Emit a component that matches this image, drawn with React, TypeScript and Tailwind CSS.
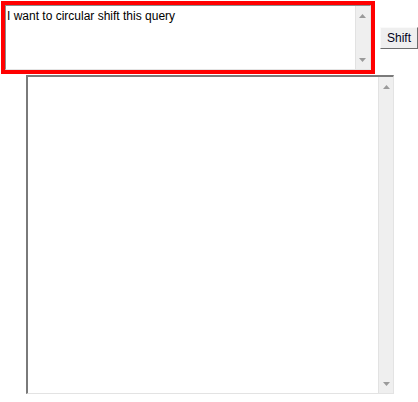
import { useState } from 'react'

const ArrowUp = () => (
  <svg width="7" height="4" viewBox="0 0 7 4">
    <polygon points="3.5,0 7,4 0,4" fill="#9a9a9a" />
  </svg>
)

const ArrowDown = () => (
  <svg width="7" height="4" viewBox="0 0 7 4">
    <polygon points="0,0 7,0 3.5,4" fill="#9a9a9a" />
  </svg>
)

const ScrollTrack = () => (
  <div className="w-[15px] shrink-0 bg-[#efefef] border-l border-[#e2e2e2] flex flex-col items-center justify-between pt-[8px] pb-[7px]">
    <ArrowUp />
    <ArrowDown />
  </div>
)

const App = () => {
  const [query, setQuery] = useState('I want to circular shift this query')
  const [result, setResult] = useState('')

  const shift = () => {
    const words = query.split(' ')
    const out: string[] = []
    for (let i = 0; i < words.length; i++) {
      out.push([...words.slice(i), ...words.slice(0, i)].join(' '))
    }
    setResult(out.join('\n'))
  }

  return (
    <div className="w-[418px] h-[402px] bg-white pt-px pl-px font-['Liberation_Sans',Arial,sans-serif] text-[12px] text-black">
      <div className="flex items-center gap-[5px]">
        <div className="w-[374px] h-[73px] border-4 border-[#ff0000]">
          <div className="flex h-full border-t border-l border-[#8c8c8c] border-b border-r border-b-[#e3e3e3] border-r-[#e3e3e3]">
            <textarea
              value={query}
              onChange={(e) => setQuery(e.target.value)}
              className="flex-1 resize-none overflow-hidden outline-none pt-[3px] pl-px leading-[14px] bg-white"
            />
            <ScrollTrack />
          </div>
        </div>
        <button
          onClick={shift}
          className="h-[22px] px-[6px] bg-[#efefef] border border-[#fafafa] border-b-[#6d6d6d] border-r-[#6d6d6d] text-[12px] text-[#00001a] leading-none"
        >
          Shift
        </button>
      </div>
      <div className="ml-[25px] mt-[1px] w-[368px] h-[319px] flex border-t-2 border-l-2 border-[#7a7a7a] border-b border-r border-b-[#e3e3e3] border-r-[#e3e3e3]">
        <textarea
          value={result}
          readOnly
          className="flex-1 resize-none overflow-hidden outline-none p-[2px] leading-[14px] bg-white"
        />
        <ScrollTrack />
      </div>
    </div>
  )
}

export default App
